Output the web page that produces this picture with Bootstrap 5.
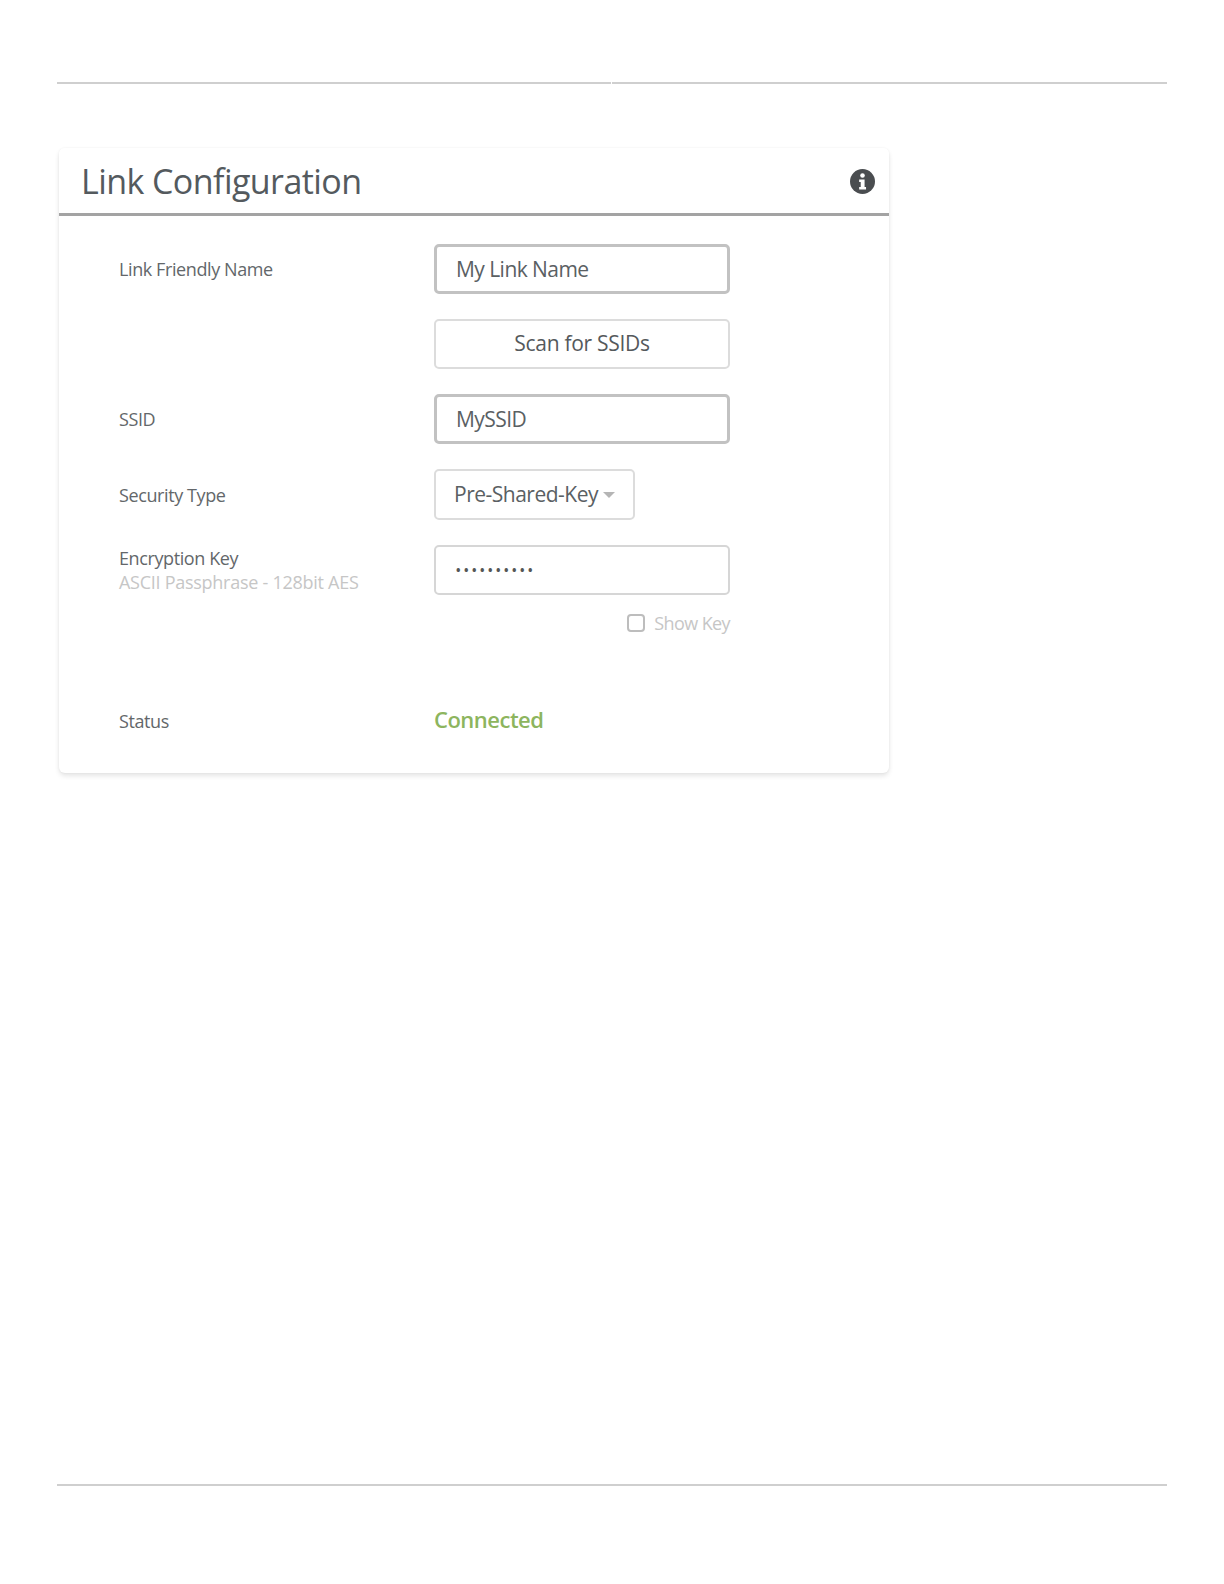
<!DOCTYPE html>
<html lang="en">
<head>
<meta charset="utf-8">
<title>Link Configuration</title>
<link href="https://cdn.jsdelivr.net/npm/bootstrap@5.3.0/dist/css/bootstrap.min.css" rel="stylesheet">
<style>
html, body { height: 100%; }
body { background: #fff; font-family: "Open Sans", "Liberation Sans", sans-serif; color: #555; letter-spacing: -.2px; }
.page-frame { width: 1224px; height: 1584px; padding: 82px 57px 0; overflow: hidden; }
.rule-line { height: 2px; background: #cfcfcf; }
.rule-top { display: flex; gap: 1px; }
.rule-top span { height: 2px; background: #cfcfcf; }
.rule-top span:first-child { width: 554px; }
.rule-top span:last-child { flex: 1; }
.rule-bottom { margin-top: 711px; }
.config-card { width: 830px; height: 625px; margin: 64px 0 0 2px; border: 0; border-radius: 6px; background: #fff;
  box-shadow: 0 3px 5px rgba(0,0,0,.1), 0 0 3px rgba(0,0,0,.05); }
.config-head { height: 68px; padding: 0 14px 0 22px; background: #fff; border: 0; border-bottom: 3px solid #a3a3a3; border-radius: 6px 6px 0 0 !important; }
.config-title { font-size: 34px; font-weight: 400; line-height: 1; color: #545a5e; letter-spacing: -.57px; margin: 0; }
.config-body { padding: 28px 0 0 60px; }
.form-line { display: flex; align-items: center; margin-bottom: 25px; }
.field-name { width: 315px; font-size: 18px; line-height: 24px; color: #63676a; margin: 0; padding: 0; letter-spacing: -.4px; }
.field-sub { display: block; color: #c6c6c6; letter-spacing: -.27px; }
.field-box { width: 296px; height: 50px; border: 2px solid #d6d6d6; border-radius: 5px; padding: 0 20px; font-size: 21px; color: #5a6063; letter-spacing: -.55px; background: #fff; box-shadow: none; }
.field-strong { border: 3px solid #c2c2c2; padding: 0 19px; }
.field-strong:focus, .field-box:focus { box-shadow: none; border-color: #c2c2c2; color: #5a6063; }
.field-pass { font-size: 12px; letter-spacing: 3.5px; color: #555; font-weight: 700; }
.scan-btn { display: block; width: 296px; height: 50px; padding: 0; border: 2px solid #dcdcdc; border-radius: 5px; font-size: 21px; color: #55595c; background: #fff; letter-spacing: -.3px; }
.type-btn { display: flex; align-items: center; width: 201px; height: 51px; padding: 0 0 0 18px; border: 2px solid #dcdcdc; border-radius: 5px; font-size: 21px; color: #5a6063; background: #fff; letter-spacing: -.5px; }
.type-btn::after { border-top: 6px solid #b5b5b5; border-right: 6px solid transparent; border-left: 6px solid transparent; border-bottom: 0; margin-left: 5px; }
.key-option { width: 611px; justify-content: flex-end; margin: -9px 0 0; min-height: 24px; padding: 0; color: #c6c6c6; font-size: 18px; letter-spacing: -.6px; line-height: 24px; gap: 9px; }
.key-option .form-check-input { width: 18px; height: 18px; margin: 0; float: none; border: 2px solid #bdbdbd; border-radius: 4px; }
.key-option .form-check-label { opacity: 1; }
.status-line { margin-top: 69px; margin-bottom: 0; }
.status-text { font-size: 22px; font-weight: 600; color: #8db55e; line-height: 30px; letter-spacing: -.5px; padding-bottom: 3px; }
.info-mark { width: 25px; height: 25px; display: block; margin-top: 2px; }
</style>
</head>
<body>
<div class="page-frame">
  <div class="rule-top"><span></span><span></span></div>
  <div class="card config-card">
    <div class="card-header config-head d-flex align-items-center justify-content-between">
      <h1 class="config-title">Link Configuration</h1>
      <svg class="info-mark" viewBox="0 0 24 24" aria-label="Info" role="img">
        <circle cx="12" cy="12" r="12" fill="#4a4d50"/>
        <circle cx="12" cy="6.3" r="2.2" fill="#fff"/>
        <path d="M8.8 10h5.2v7.2h1.4V19.6H8.8v-2.4h1.5v-4.8H8.8z" fill="#fff"/>
      </svg>
    </div>
    <div class="card-body config-body">
      <div class="form-line">
        <label class="field-name" for="linkName">Link Friendly Name</label>
        <input id="linkName" class="form-control field-box field-strong" type="text" value="My Link Name">
      </div>
      <div class="form-line">
        <span class="field-name"></span>
        <button class="btn scan-btn" type="button">Scan for SSIDs</button>
      </div>
      <div class="form-line">
        <label class="field-name" for="ssid">SSID</label>
        <input id="ssid" class="form-control field-box field-strong" type="text" value="MySSID">
      </div>
      <div class="form-line">
        <span class="field-name">Security Type</span>
        <button class="btn dropdown-toggle type-btn" type="button">Pre-Shared-Key</button>
      </div>
      <div class="form-line">
        <label class="field-name" for="key">Encryption Key<span class="field-sub">ASCII Passphrase - 128bit AES</span></label>
        <input id="key" class="form-control field-box field-pass" type="password" value="1234567890">
      </div>
      <div class="form-check d-flex align-items-center key-option">
        <input class="form-check-input" type="checkbox" id="showKey">
        <label class="form-check-label" for="showKey">Show Key</label>
      </div>
      <div class="form-line status-line">
        <span class="field-name">Status</span>
        <span class="status-text">Connected</span>
      </div>
    </div>
  </div>
  <div class="rule-line rule-bottom"></div>
</div>
<script src="https://cdn.jsdelivr.net/npm/bootstrap@5.3.0/dist/js/bootstrap.bundle.min.js"></script>
</body>
</html>
